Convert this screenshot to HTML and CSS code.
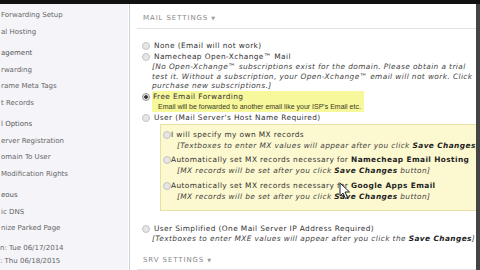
FILE: index.html
```html
<!DOCTYPE html>
<html lang="en">
<head>
  <meta charset="UTF-8">
  <title>Mail Settings</title>
  <link rel="stylesheet" href="styles.css">
</head>
<body>
  <div class="topbar"></div>
  <div class="layout">
    <nav class="sidebar">
      <div class="side-group">
        <div class="side-link">Forwarding Setup</div>
        <div class="side-link">al Hosting</div>
      </div>
      <div class="side-group">
        <div class="side-link side-head">agement</div>
        <div class="side-link">rwarding</div>
        <div class="side-link">rame Meta Tags</div>
        <div class="side-link">t Records</div>
      </div>
      <div class="side-group">
        <div class="side-link side-head">l Options</div>
        <div class="side-link">erver Registration</div>
        <div class="side-link">omain To User</div>
        <div class="side-link">Modification Rights</div>
      </div>
      <div class="side-group">
        <div class="side-link side-head">eous</div>
        <div class="side-link">ic DNS</div>
        <div class="side-link">nize Parked Page</div>
      </div>
      <div class="side-group dates">
        <div class="side-date">n: Tue 06/17/2014</div>
        <div class="side-date">: Thu 06/18/2015</div>
      </div>
    </nav>

    <main class="main">
      <div class="section-head">MAIL SETTINGS <span class="caret">&#9660;</span></div>

      <div class="options">
        <div class="opt">
          <div class="opt-row"><span class="radio"></span><span class="label">None (Email will not work)</span></div>
        </div>
        <div class="opt">
          <div class="opt-row"><span class="radio"></span><span class="label">Namecheap Open-Xchange&trade; Mail</span></div>
          <div class="note">[<i>No</i> Open-Xchange&trade; subscriptions exist for the domain. Please obtain a trial</div>
          <div class="note">test it. Without a subscription, your Open-Xchange&trade; email will not work. Click</div>
          <div class="note">purchase new subscriptions.]</div>
        </div>
        <div class="opt">
          <div class="opt-row">
            <span class="radio checked"></span>
            <div class="highlight">
              <div class="label">Free Email Forwarding</div>
              <div class="hl-note">Email will be forwarded to another email like your ISP's Email etc.</div>
            </div>
          </div>
        </div>
        <div class="opt">
          <div class="opt-row"><span class="radio"></span><span class="label">User (Mail Server's Host Name Required)</span></div>
        </div>

        <div class="mx-box">
          <div class="mx-opt">
            <div class="opt-row"><span class="radio"></span><span class="label">I will specify my own MX records</span></div>
            <div class="note">[Textboxes to enter MX values will appear after you click <b>Save Changes</b>]</div>
          </div>
          <div class="mx-opt">
            <div class="opt-row"><span class="radio"></span><span class="label">Automatically set MX records necessary for <b>Namecheap Email Hosting</b></span></div>
            <div class="note">[MX records will be set after you click <b>Save Changes</b> button]</div>
          </div>
          <div class="mx-opt">
            <div class="opt-row"><span class="radio"></span><span class="label">Automatically set MX records necessary for <b>Google Apps Email</b></span></div>
            <div class="note">[MX records will be set after you click <b>Save Changes</b> button]</div>
          </div>
        </div>

        <div class="opt">
          <div class="opt-row"><span class="radio"></span><span class="label">User Simplified (One Mail Server IP Address Required)</span></div>
          <div class="note">[Textboxes to enter MXE values will appear after you click the <b>Save Changes</b>]</div>
        </div>
      </div>

      <div class="section-head srv">SRV SETTINGS <span class="caret">&#9660;</span></div>
    </main>
  </div>

  <svg class="cursor" width="12" height="18" viewBox="0 0 12 18">
    <path d="M1 1 L1 14 L4 11 L6.5 16.5 L8.5 15.5 L6 10 L10.5 10 Z" fill="#fff" stroke="#222" stroke-width="1"/>
  </svg>
</body>
</html>
```

FILE: styles.css
```css
html, body {
  margin: 0;
  padding: 0;
}

body {
  width: 480px;
  height: 270px;
  overflow: hidden;
  background-color: #fff;
  font-family: 'DejaVu Sans', Verdana, sans-serif;
  color: #333;
  position: relative;
}

.topbar {
  height: 4px;
  background-color: #111;
}

.layout {
  display: flex;
  height: 266px;
}

/* left menu, scrolled partly out of view */
.sidebar {
  width: 128px;
  flex-shrink: 0;
  background-color: #f4f4f9;
  border-right: 1px solid #fff;
  box-shadow: 1px 0 0 #cfcfd6;
  padding-top: 3px;
  overflow: hidden;
}

.side-group {
  margin-bottom: 5px;
}

.side-link {
  font-size: 7px;
  line-height: 16.5px;
  color: #666;
  white-space: nowrap;
  padding-left: 1px;
}

.side-head {
  color: #555;
}

.side-date {
  font-size: 7px;
  line-height: 13px;
  color: #666;
  white-space: nowrap;
}

.main {
  flex: 1;
  margin-left: 2px;
  padding-left: 6px;
  border-right: 4px solid #444;
  overflow: hidden;
  white-space: nowrap;
}

.section-head {
  font-size: 7px;
  letter-spacing: 0.9px;
  color: #888;
  line-height: 10px;
  padding: 9px 0 5px 6px;
  border-bottom: 1px solid #e2e2e2;
}

.caret {
  font-size: 5px;
  color: #999;
}

.section-head.srv {
  margin-top: 13px;
  padding: 0 0 4px 6px;
  line-height: 9px;
}

.options {
  padding-top: 11px;
}

.opt-row {
  display: flex;
  align-items: flex-start;
}

.radio {
  width: 6px;
  height: 6px;
  margin: 2px 4px 0 5px;
  border-radius: 50%;
  border: 1px solid #c4c4c4;
  background-color: #e6e6e6;
  flex-shrink: 0;
}

.radio.checked {
  background: radial-gradient(circle, #333 0, #333 1.5px, #ddd 2px);
  border-color: #999;
}

.label {
  font-size: 7.4px;
  line-height: 11px;
  letter-spacing: 0.4px;
  color: #333;
}

.label b {
  color: #222;
}

.note {
  font-size: 7.4px;
  line-height: 9.5px;
  letter-spacing: 0.4px;
  font-style: italic;
  color: #444;
  padding-left: 15px;
}

.note b {
  color: #222;
}

.highlight {
  background-color: #f7f79c;
  padding: 0 3px 0 1px;
  margin-left: -2px;
}

.hl-note {
  font-family: 'Liberation Sans', Arial, sans-serif;
  font-size: 7px;
  line-height: 10px;
  color: #3a3a20;
  padding-left: 5px;
}

/* MX choices nested under the user host option */
.mx-box {
  margin: 1px -20px 12px 23px;
  padding: 4px 0 8px 0;
  background-color: #fcf8d0;
  border: 1px solid #e6dfa6;
}

.mx-opt {
  margin-bottom: 3.5px;
}

.mx-opt:last-child {
  margin-bottom: 0;
}

.mx-opt .radio {
  margin: 2px 0 0 2px;
}

.mx-opt .note {
  line-height: 11px;
  padding-left: 16px;
}

.cursor {
  position: absolute;
  left: 339px;
  top: 182px;
}
```
